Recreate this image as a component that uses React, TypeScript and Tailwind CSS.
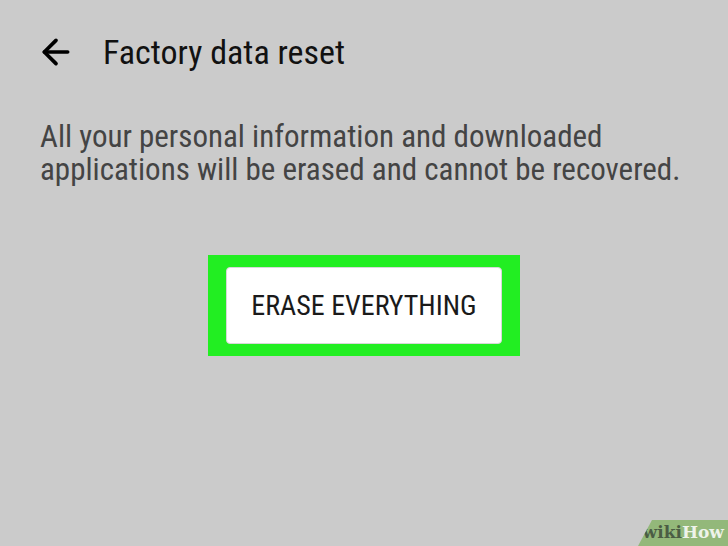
import { ArrowLeft } from 'lucide-react';

const narrow = { fontFamily: '"Roboto Condensed", "Liberation Sans Narrow", "Liberation Sans", sans-serif' };

export default function App() {
  return (
    <div className="relative w-[728px] h-[546px] overflow-hidden bg-[#cbcbcb] text-black" style={narrow}>
      {/* header */}
      <div className="flex items-center h-[48px] mt-[28px] pl-[36px]">
        <ArrowLeft className="w-[40px] h-[40px]" strokeWidth={2.2} />
        <h1 className="ml-[27px] text-[34px] leading-none text-[#111]">Factory data reset</h1>
      </div>

      <p className="mt-[44px] px-[40px] text-[31px] leading-[33px] text-[#444]">
        All your personal information and downloaded applications will be erased and cannot be recovered.
      </p>

      <div className="flex justify-center mt-[69px]">
        <div className="w-[312px] h-[101px] bg-[#22ee22] p-[12px] pl-[18px] pr-[18px] flex">
          <button className="flex-1 bg-white border border-[#d8d8d8] rounded-[4px] text-[28px] text-[#1a1a1a]">
            ERASE EVERYTHING
          </button>
        </div>
      </div>

      {/* wikiHow badge */}
      <div className="absolute right-0 bottom-0 flex items-end">
        <div
          className="h-[26px] w-[90px] bg-[#93b87a] flex items-center justify-end pr-[4px] font-bold text-[17px]"
          style={{ clipPath: 'polygon(14px 0, 100% 0, 100% 100%, 0 100%)', fontFamily: '"DejaVu Serif", serif' }}
        >
          <span className="text-[#4b5d44]">wiki</span>
          <span className="text-[#eef3ea]">How</span>
        </div>
      </div>
    </div>
  );
}
